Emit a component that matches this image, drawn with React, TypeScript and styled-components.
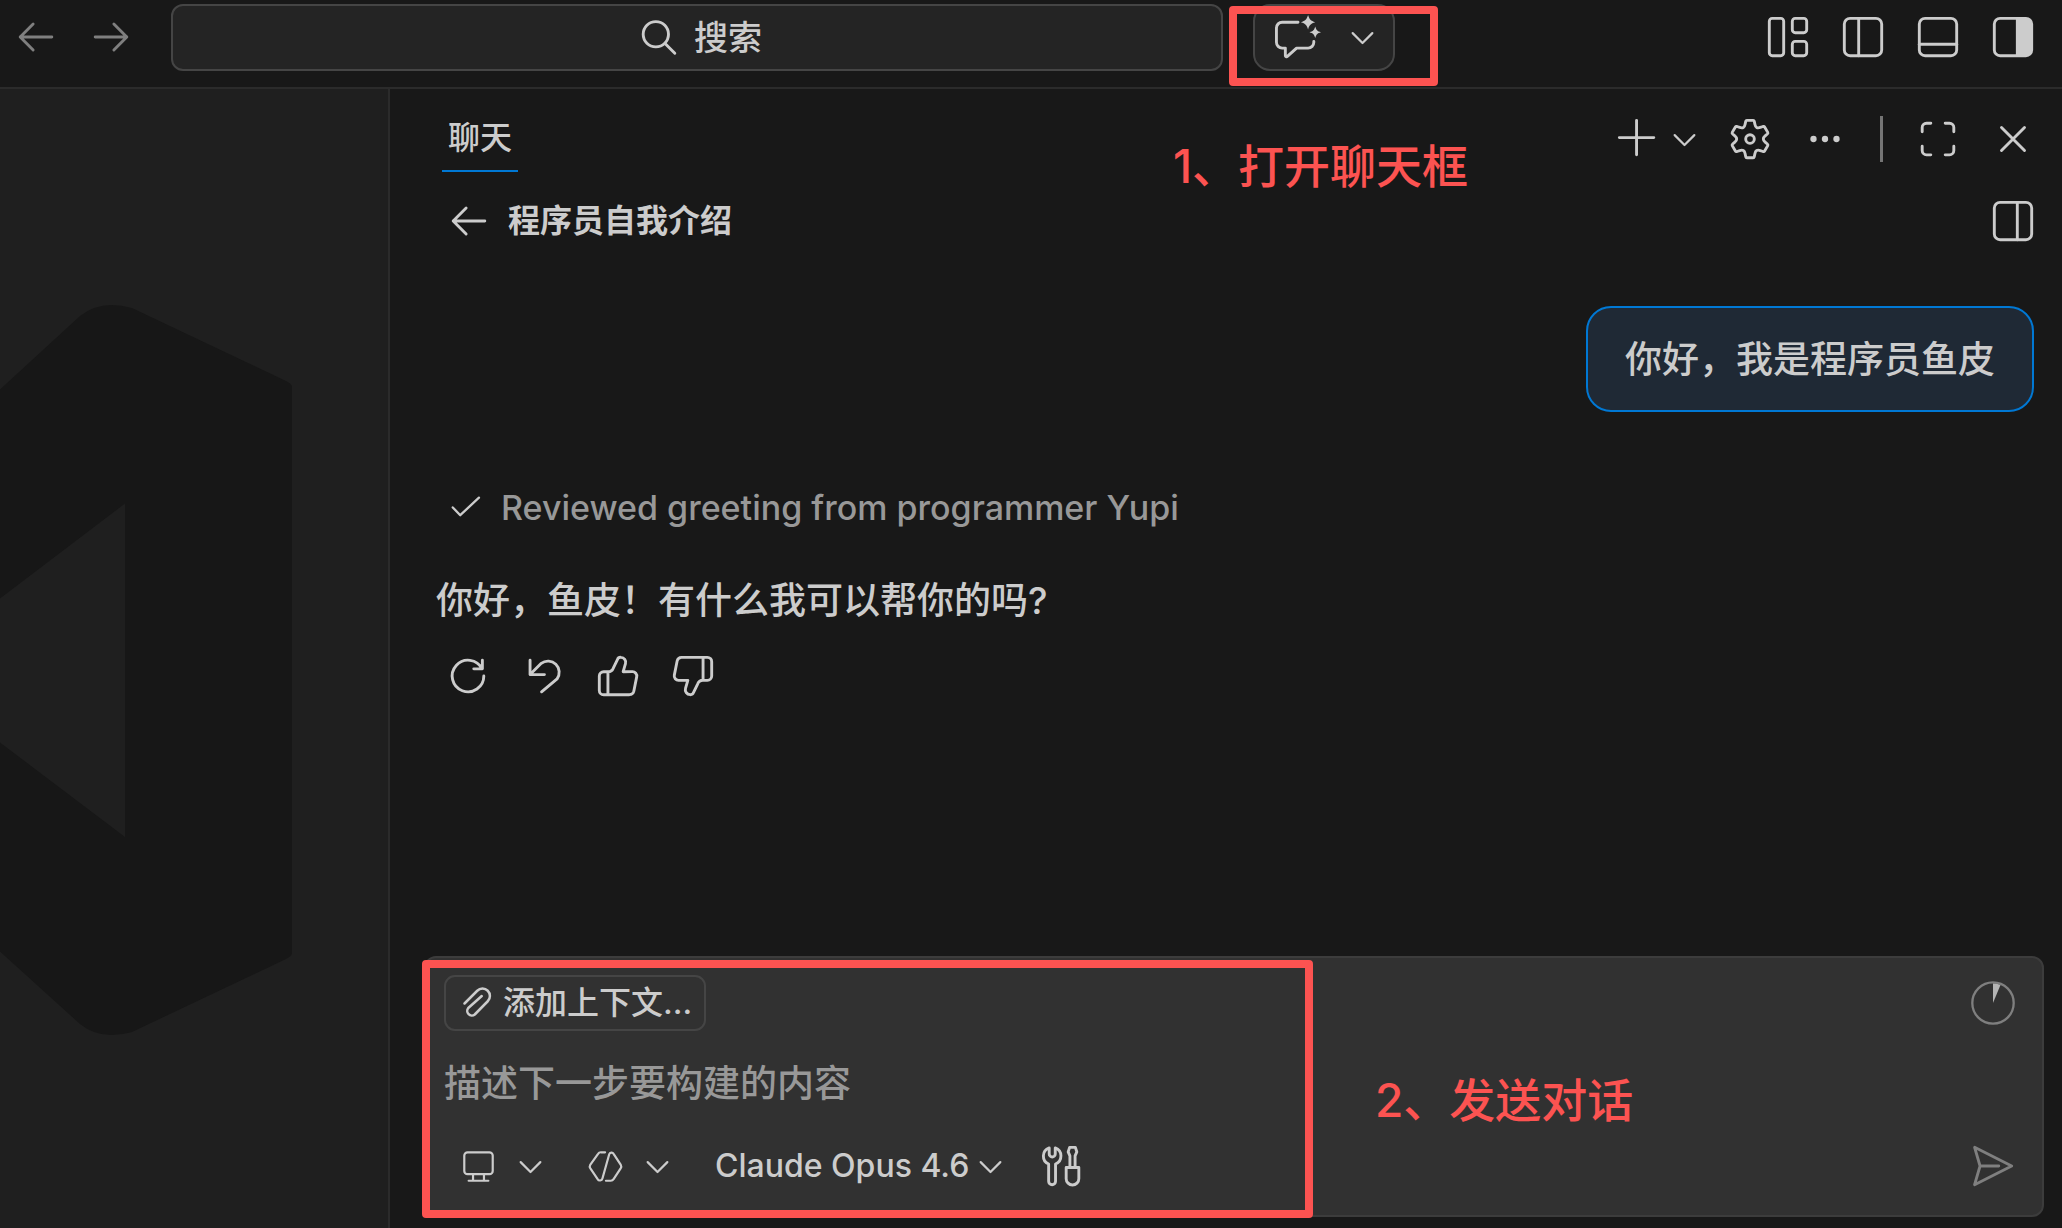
import React from "react";
import styled, { createGlobalStyle } from "styled-components";

const color = {
  chrome: "#181818",
  editor: "#1f1f1f",
  line: "#2b2b2b",
  field: "#313131",
  fieldLine: "#3c3c3c",
  text: "#cccccc",
  muted: "#989898",
  dim: "#7f7f7f",
  accent: "#0078d4",
  mark: "#fc5351",
};

const GlobalStyle = createGlobalStyle`
  *, *::before, *::after { box-sizing: border-box; }
  body {
    margin: 0;
    background: ${color.chrome};
    color: ${color.text};
    font-family: Inter, "Noto Sans CJK SC", sans-serif;
    font-weight: 500;
  }
  button, input, select, textarea {
    margin: 0;
    padding: 0;
    border: 0;
    background: none;
    color: inherit;
    font: inherit;
    outline: none;
  }
  button { cursor: pointer; }
  p, h1 { margin: 0; }
`;

/* ---------- icons, all drawn on a 16 unit grid ---------- */

const Svg = styled.svg<{ $size: number }>`
  display: block;
  flex: none;
  width: ${(p) => p.$size}px;
  height: ${(p) => p.$size}px;
  fill: none;
  stroke: currentColor;
  stroke-width: 1;
  stroke-linecap: round;
  stroke-linejoin: round;
  overflow: visible;
`;

function Icon({ size = 46, children }: { size?: number; children: React.ReactNode }) {
  return (
    <Svg $size={size} viewBox="0 0 16 16" aria-hidden="true">
      {children}
    </Svg>
  );
}

function gearPath() {
  const turn = (x: number, y: number, k: number) => {
    const a = (k * Math.PI) / 3;
    const px = 8 + x * Math.cos(a) - y * Math.sin(a);
    const py = 8 + x * Math.sin(a) + y * Math.cos(a);
    return `${px.toFixed(2)} ${py.toFixed(2)}`;
  };
  let d = "";
  for (let k = 0; k < 6; k++) {
    d += `${k ? "L" : "M"}${turn(-1.1, -6.5, k)}L${turn(1.1, -6.5, k)}`;
    d += `Q${turn(1.4, -6.5, k)} ${turn(1.5, -6.1, k)}L${turn(1.7, -5.1, k)}`;
    d += `C${turn(1.9, -4, k)} ${turn(2.52, -3.65, k)} ${turn(3.57, -4.02, k)}`;
    d += `L${turn(4.53, -4.35, k)}Q${turn(4.93, -4.46, k)} ${turn(5.08, -4.2, k)}`;
  }
  return d + "Z";
}
const GEAR = gearPath();

const ArrowLeft = () => <Icon><path d="M7 3.5 2.5 8 7 12.5M2.5 8h11" /></Icon>;
const ArrowRight = () => <Icon><path d="M9 3.5 13.5 8 9 12.5M13.5 8h-11" /></Icon>;
const SearchIcon = () => <Icon><circle cx="6.9" cy="6.7" r="4.4" /><path d="m10.1 9.900 3.400 3.400" /></Icon>;
const Chevron = () => <Icon size={35}><path d="M3.5 6 8 10.5 12.5 6" /></Icon>;
const ChatSparkle = () => (
  <Icon>
    <path d="M8 2.5H2.5a2 2 0 0 0-2 2v5a2 2 0 0 0 2 2h1.1v2.6a.4.4 0 0 0 .7.3l3.2-2.9h4a2 2 0 0 0 2-2v-.3" />
    <path
      fill="currentColor"
      stroke="none"
      d="M11.5 0c.5 1.6.9 2 2.5 2.5-1.6.5-2 .9-2.5 2.5-.5-1.6-.9-2-2.5-2.5C10.6 2 11 1.6 11.5 0zM14 4c.4 1.3.7 1.6 2 2-1.3.4-1.6.7-2 2-.4-1.3-.7-1.6-2-2 1.3-.4 1.6-.7 2-2z"
    />
  </Icon>
);
const LayoutCustom = () => (
  <Icon>
    <rect x="1.5" y="1.5" width="5" height="13" rx="1" />
    <rect x="9.5" y="1.5" width="5" height="5" rx="1" />
    <rect x="9.5" y="9.5" width="5" height="5" rx="1" />
  </Icon>
);
const Frame = () => <rect x="1.5" y="1.5" width="13" height="13" rx="2" />;
const LayoutLeft = () => <Icon><Frame /><path d="M6.5 1.5v13" /></Icon>;
const LayoutBottom = () => <Icon><Frame /><path d="M1.5 10.5h13" /></Icon>;
const LayoutRightFilled = () => (
  <Icon><Frame /><path fill="currentColor" stroke="none" d="M9 1.5h3.5a2 2 0 0 1 2 2v9a2 2 0 0 1-2 2H9z" /></Icon>
);
const LayoutRight = () => <Icon><Frame /><path d="M9.5 1.5v13" /></Icon>;
const Plus = () => <Icon><path d="M7.5 1.5v12M1.5 7.5h12" /></Icon>;
const Gear = () => <Icon><path d={GEAR} /><circle cx="8" cy="8" r="1.5" /></Icon>;
const Dots = () => (
  <Icon>
    <g fill="currentColor" stroke="none"><circle cx="4" cy="8" r="1.1" /><circle cx="8" cy="8" r="1.1" /><circle cx="12" cy="8" r="1.1" /></g>
  </Icon>
);
const FullScreen = () => (
  <Icon>
    <path d="M5.5 2.5H4A1.5 1.5 0 0 0 2.5 4v1.500M10.5 2.5H12A1.5 1.5 0 0 1 13.5 4v1.500M5.5 13.5H4A1.5 1.5 0 0 1 2.5 12v-1.500M10.5 13.5H12a1.5 1.5 0 0 0 1.5-1.5v-1.500" />
  </Icon>
);
const Close = () => <Icon><path d="m4 4 8 8M12 4l-8 8" /></Icon>;
const Check = () => <Icon><path strokeWidth=".8" d="m3.4 7.8 2.6 2.7 6.5-6.100" /></Icon>;
const Refresh = () => <Icon><path d="M13.5 8A5.5 5.5 0 1 1 12.9 5.5M13 2.5v3h-3" /></Icon>;
const Undo = () => <Icon><path d="M3.5 2.5v5h5M3.5 7.5l3.900-3.900A3.900 3.900 0 0 1 12.900 9L7.500 13.500" /></Icon>;
const THUMB =
  "M4.5 6.5H3A1.5 1.5 0 0 0 1.5 8v5A1.5 1.5 0 0 0 3 14.5h9a1.6 1.6 0 0 0 1.5-1.2l1-5A1.5 1.5 0 0 0 13 6.5H9.8l.8-2.8a1.700 1.700 0 0 0-1.600-2.200 1.200 1.200 0 0 0-1.200.8L6.400 5.200A2 2 0 0 1 4.500 6.500zM4.500 6.500v8";
const ThumbUp = () => <Icon><path d={THUMB} /></Icon>;
const ThumbDown = () => <Icon><path d={THUMB} transform="rotate(180 8 8)" /></Icon>;
const Clip = () => (
  <Icon size={40}>
    <path d="m3 8.2 5.100-5.100a2.900 2.900 0 0 1 4.200 4.200l-5.200 5.300a1.850 1.850 0 0 1-2.600-2.600L9.900 5.200" />
  </Icon>
);
const Monitor = () => (
  <Icon size={35}>
    <rect x="1.5" y="1.5" width="13" height="10" rx="1.5" />
    <path d="M5.5 11.5v3M10.5 11.5v3M3.5 14.5h9" />
  </Icon>
);
const CodeHex = () => (
  <Icon size={35}>
    <path d="M7.8 1.5H5.9a1.5 1.5 0 0 0-1.3.7L1 7.3a1.4 1.4 0 0 0 0 1.4l3.4 5.1a1.2 1.2 0 0 0 2.2-.3L9.7 2.4a1.1 1.1 0 0 1 2-.2L15 7.3a1.4 1.4 0 0 1 0 1.4l-3.3 5.1a1.5 1.5 0 0 1-1.3.7H8.2" />
  </Icon>
);
const Tools = () => (
  <Icon>
    <path d="M3.9 1.7A3 3 0 0 0 3.7 7.3v6a1.2 1.2 0 0 0 2.4 0v-6A3 3 0 0 0 6 1.7v2.1a1.050 1.050 0 0 1-2.100 0z" />
    <path d="M11.1 8.5v-4l-.6-1.400.5-1.600h2l.5 1.600-.6 1.400v4M9.800 8.500h4.400v3.900a2.200 2.200 0 0 1-4.400 0z" />
  </Icon>
);
const Send = () => <Icon><path d="M1.6 1.5 14.5 8 1.6 14.5 3.5 8zM3.5 8H10" /></Icon>;
const Usage = () => (
  <Icon>
    <circle cx="8" cy="8" r="7.2" strokeWidth=".8" />
    <path fill="#b4b4b4" stroke="none" d="M8 8V1.200a6.800 6.800 0 0 1 2.600.5z" />
  </Icon>
);

/* ---------- layout ---------- */

const Page = styled.div`
  position: relative;
  display: flex;
  flex-direction: column;
  min-height: 100vh;
  overflow: hidden;
`;

const TitleBar = styled.header`
  display: flex;
  align-items: flex-start;
  height: 89px;
  padding: 4px 26px 0 13px;
  border-bottom: 2px solid ${color.line};
`;

const IconRow = styled.div<{ $height?: number; $tone?: string }>`
  display: flex;
  align-items: center;
  gap: 29px;
  height: ${(p) => (p.$height ? `${p.$height}px` : "auto")};
  color: ${(p) => p.$tone ?? color.text};
`;

const IconButton = styled.button<{ $tone?: string }>`
  display: flex;
  align-items: center;
  color: ${(p) => p.$tone ?? "inherit"};
`;

const NewChatButton = styled(IconButton)`
  gap: 6px;
  margin-right: -4px;
`;

const PickerButton = styled(IconButton)`
  gap: 17px;
`;

const SearchBox = styled.label`
  display: flex;
  flex: 0 1 52%;
  align-items: center;
  justify-content: center;
  gap: 12px;
  height: 67px;
  margin-left: 37px;
  padding-left: 8px;
  border: 2px solid #454545;
  border-radius: 12px;
  background: #242424;
`;

const SearchInput = styled.input`
  width: 72px;
  height: 54px;
  font-size: 34px;
  &::placeholder { color: ${color.text}; opacity: 1; }
`;

const ChatToggle = styled.button`
  display: flex;
  flex: none;
  align-items: center;
  gap: 24px;
  height: 67px;
  margin: 0 auto 0 30px;
  padding: 0 13px 0 20px;
  border: 2px solid #454545;
  border-radius: 17px;
  background: #242424;
`;

const Body = styled.div`
  display: flex;
  flex: 1;
`;

const Editor = styled.aside`
  display: flex;
  flex: none;
  align-items: center;
  width: 390px;
  padding-top: 23px;
  border-right: 2px solid ${color.line};
  background: ${color.editor};
`;

const Watermark = styled.svg`
  display: block;
  width: 292px;
  height: 734px;
  fill: #171717;
`;

const Panel = styled.main`
  display: flex;
  flex: 1;
  flex-direction: column;
  min-width: 0;
`;

const PanelBar = styled.div<{ $height: number; $left: number }>`
  display: flex;
  align-items: center;
  justify-content: space-between;
  height: ${(p) => p.$height}px;
  padding: 0 26px 0 ${(p) => p.$left}px;
`;

const Tab = styled.button`
  height: 66px;
  padding: 0 6px;
  border-bottom: 2px solid ${color.accent};
  font-size: 32px;
  line-height: 64px;
`;

const Actions = styled.div`
  display: flex;
  align-items: center;
  gap: 32px;
`;

const Divider = styled.span`
  width: 3px;
  height: 46px;
  background: #757575;
`;

const TitleGroup = styled.div`
  display: flex;
  align-items: center;
  gap: 16px;
`;

const ChatTitle = styled.h1`
  font-size: 32px;
  font-weight: 700;
  line-height: 46px;
`;

const Conversation = styled.section`
  display: flex;
  flex: 1;
  flex-direction: column;
  align-items: flex-start;
  padding: 53px 28px 40px 46px;
`;

const UserBubble = styled.p`
  align-self: flex-end;
  padding: 25px 37px 23px;
  border: 2px solid ${color.accent};
  border-radius: 25px;
  background: #1f2935;
  font-size: 37px;
  line-height: 54px;
`;

const StepLine = styled.div`
  display: flex;
  align-items: center;
  gap: 12px;
  margin-top: 73px;
  padding-left: 7px;
`;

const StepText = styled.span`
  color: ${color.muted};
  font-size: 34px;
  line-height: 46px;
`;

const Answer = styled.p`
  margin: 43px 0 25px;
  font-size: 37px;
  line-height: 54px;
`;

const Feedback = styled(IconRow)`
  padding-left: 9px;
`;

const Composer = styled.form`
  margin: 0 18px 11px 34px;
  padding: 17px 26px 26px 18px;
  border: 2px solid ${color.fieldLine};
  border-radius: 12px;
  background: ${color.field};
`;

const ComposerRow = styled.div`
  display: flex;
  align-items: center;
  justify-content: space-between;
`;

const ContextButton = styled.button`
  display: flex;
  align-items: center;
  gap: 6px;
  height: 56px;
  padding: 0 12px 0 11px;
  border: 2px solid #454545;
  border-radius: 11px;
  font-size: 32px;
  line-height: 46px;
`;

const Prompt = styled.textarea`
  display: block;
  width: 100%;
  height: 54px;
  margin: 26px 0 32px;
  font-size: 37px;
  line-height: 54px;
  resize: none;
  overflow: hidden;
  &::placeholder { color: ${color.muted}; opacity: 1; }
`;

const Pickers = styled.div`
  display: flex;
  align-items: center;
  gap: 40px;
  padding-left: 17px;
`;

const ModelPicker = styled.label`
  display: flex;
  align-items: center;
  gap: 3px;
  margin-right: -10px;
`;

const ModelSelect = styled.select`
  appearance: none;
  height: 46px;
  font-size: 32px;
  line-height: 46px;
`;

/* ---------- tutorial marks drawn over the window ---------- */

const MarkBox = styled.div<{ $x: number; $y: number; $w: number; $h: number }>`
  position: absolute;
  left: ${(p) => p.$x}px;
  top: ${(p) => p.$y}px;
  width: ${(p) => p.$w}px;
  height: ${(p) => p.$h}px;
  border: 8px solid ${color.mark};
  border-radius: 4px;
  pointer-events: none;
`;

const MarkText = styled.p<{ $x: number; $y: number }>`
  position: absolute;
  left: ${(p) => p.$x}px;
  top: ${(p) => p.$y}px;
  color: ${color.mark};
  font-size: 46px;
  line-height: 60px;
  white-space: nowrap;
`;

export default function App() {
  return (
    <Page lang="zh-CN">
      <GlobalStyle />
      <TitleBar>
        <IconRow as="nav" $height={66} $tone={color.dim}>
          <IconButton aria-label="后退"><ArrowLeft /></IconButton>
          <IconButton aria-label="前进"><ArrowRight /></IconButton>
        </IconRow>
        <SearchBox>
          <SearchIcon />
          <SearchInput type="text" placeholder="搜索" aria-label="搜索" />
        </SearchBox>
        <ChatToggle aria-label="切换聊天">
          <ChatSparkle />
          <Chevron />
        </ChatToggle>
        <IconRow $height={66}>
          <IconButton aria-label="自定义布局"><LayoutCustom /></IconButton>
          <IconButton aria-label="主侧栏"><LayoutLeft /></IconButton>
          <IconButton aria-label="面板"><LayoutBottom /></IconButton>
          <IconButton aria-label="辅助侧栏"><LayoutRightFilled /></IconButton>
        </IconRow>
      </TitleBar>

      <Body>
        <Editor>
          <Watermark viewBox="0 303 292 734" aria-hidden="true">
            <path
              fillRule="evenodd"
              d="M0 389.500 80 316Q101 299 132 308L286 381Q292 384 292 387V953Q292 956 286 959L132 1032Q101 1041 80 1024L0 951.500V742.500L125 837V503.500L0 598.500Z"
            />
          </Watermark>
        </Editor>

        <Panel>
          <PanelBar $height={100} $left={52}>
            <Tab>聊天</Tab>
            <Actions>
              <IconRow>
                <NewChatButton aria-label="新建聊天"><Plus /><Chevron /></NewChatButton>
                <IconButton aria-label="设置"><Gear /></IconButton>
                <IconButton aria-label="更多"><Dots /></IconButton>
              </IconRow>
              <Divider />
              <IconRow>
                <IconButton aria-label="最大化"><FullScreen /></IconButton>
                <IconButton aria-label="关闭"><Close /></IconButton>
              </IconRow>
            </Actions>
          </PanelBar>
          <PanelBar $height={64} $left={56}>
            <TitleGroup>
              <IconButton aria-label="返回"><ArrowLeft /></IconButton>
              <ChatTitle>程序员自我介绍</ChatTitle>
            </TitleGroup>
            <IconButton aria-label="显示会话"><LayoutRight /></IconButton>
          </PanelBar>

          <Conversation>
            <UserBubble>你好，我是程序员鱼皮</UserBubble>
            <StepLine>
              <Check />
              <StepText>Reviewed greeting from programmer Yupi</StepText>
            </StepLine>
            <Answer>你好，鱼皮！有什么我可以帮你的吗?</Answer>
            <Feedback>
              <IconButton aria-label="重试"><Refresh /></IconButton>
              <IconButton aria-label="撤销"><Undo /></IconButton>
              <IconButton aria-label="有帮助"><ThumbUp /></IconButton>
              <IconButton aria-label="无帮助"><ThumbDown /></IconButton>
            </Feedback>
          </Conversation>

          <Composer onSubmit={(e) => e.preventDefault()}>
            <ComposerRow>
              <ContextButton type="button"><Clip />添加上下文...</ContextButton>
              <IconButton type="button" $tone={color.dim} aria-label="上下文用量"><Usage /></IconButton>
            </ComposerRow>
            <Prompt rows={1} placeholder="描述下一步要构建的内容" aria-label="聊天输入" />
            <ComposerRow>
              <Pickers>
                <PickerButton type="button" aria-label="运行位置"><Monitor /><Chevron /></PickerButton>
                <PickerButton type="button" aria-label="模式"><CodeHex /><Chevron /></PickerButton>
                <ModelPicker>
                  <ModelSelect aria-label="模型">
                    <option>Claude Opus 4.6</option>
                  </ModelSelect>
                  <Chevron />
                </ModelPicker>
                <IconButton type="button" aria-label="工具"><Tools /></IconButton>
              </Pickers>
              <IconButton type="submit" $tone={color.dim} aria-label="发送"><Send /></IconButton>
            </ComposerRow>
          </Composer>
        </Panel>
      </Body>

      <MarkBox $x={1229} $y={6} $w={209} $h={80} />
      <MarkText $x={1173} $y={136}>1、打开聊天框</MarkText>
      <MarkBox $x={422} $y={960} $w={891} $h={258} />
      <MarkText $x={1375} $y={1070}>2、发送对话</MarkText>
    </Page>
  );
}
